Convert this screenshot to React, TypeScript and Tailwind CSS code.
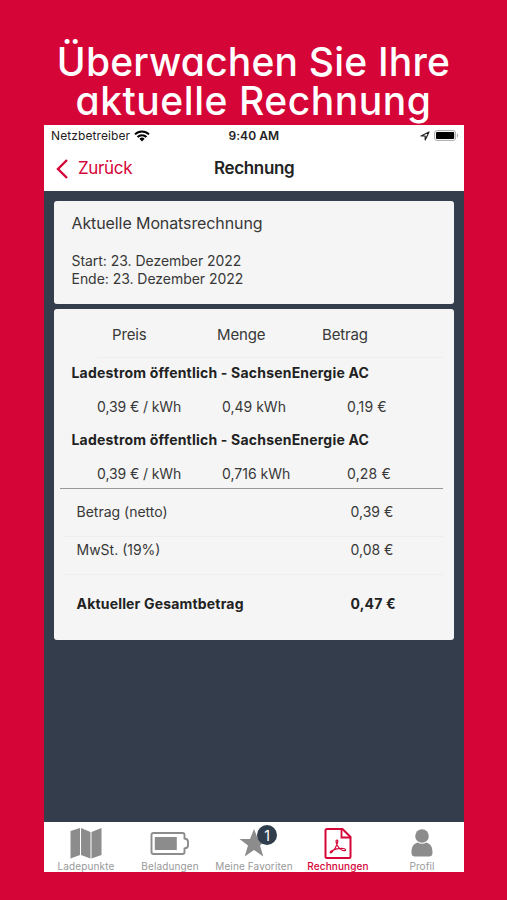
import type { ReactNode } from 'react'

const positions = [
  { title: 'Ladestrom öffentlich - SachsenEnergie AC', price: '0,39 € / kWh', amount: '0,49 kWh', total: '0,19 €' },
  { title: 'Ladestrom öffentlich - SachsenEnergie AC', price: '0,39 € / kWh', amount: '0,716 kWh', total: '0,28 €' }
]

function StatusBar() {
  return (
    <div className="relative flex h-[21px] items-center justify-between pl-[7px] pr-[5px] text-[12px] leading-[22px] text-[#222]">
      <div className="flex items-center gap-[4px]">
        <span className="tracking-[0.1px]">Netzbetreiber</span>
        <svg className="h-[12px] w-[16px]" viewBox="0 0 16 12">
          <path d="M1 4.4a10 10 0 0 1 14 0M3.5 7a6.4 6.4 0 0 1 9 0" fill="none" stroke="#000" strokeWidth="2" />
          <path d="M5.4 8.8a3.7 3.7 0 0 1 5.2 0L8 11.5z" fill="#000" />
        </svg>
      </div>
      <span className="absolute left-[184.500px] font-semibold tracking-[0.05px]">9:40 AM</span>
      <div className="flex items-center gap-[4px]">
        <svg className="h-[10px] w-[10px]" viewBox="0 0 10 10" fill="none" stroke="#222" strokeWidth="1.2" strokeLinejoin="round">
          <path d="M1 5 9 1 5.2 9V5z" />
        </svg>
        <svg className="h-[11px] w-[25px]" viewBox="0 0 25 11">
          <rect x=".6" y=".6" width="21" height="9.8" rx="2.4" fill="#fff" stroke="#aaa" />
          <rect x="2" y="2" width="18.2" height="7" rx="1" fill="#000" />
          <path d="M23 3.5c1.6.6 1.6 3.4 0 4z" fill="#aaa" />
        </svg>
      </div>
    </div>
  )
}

function Tab({ label, active, children }: { label: string; active?: boolean; children: ReactNode }) {
  return (
    <div className={`flex w-[84px] flex-col items-center ${active ? 'text-[#d50538]' : 'text-[#8c8c8c]'}`}>
      <div className="flex h-[38px] items-center pt-[4px]">{children}</div>
      <span
        className={`whitespace-nowrap text-[10px] leading-[12px] ${
          active ? 'font-medium tracking-[0.12px]' : 'tracking-[0.12px] text-[#999]'
        }`}
      >
        {label}
      </span>
    </div>
  )
}

function TabBar() {
  return (
    <nav className="flex h-[50px] bg-white">
      <Tab label="Ladepunkte">
        <svg className="h-[31px] w-[32px]" viewBox="0 0 32 31" fill="currentColor">
          <path d="M.5 3 10 0v27L.5 30.5zM11 0l9.5 4v26.5L11 27zM21.5 4 31.500 0v27l-10 3.500z" />
        </svg>
      </Tab>
      <Tab label="Beladungen">
        <svg className="h-[23px] w-[40px]" viewBox="0 0 40 23">
          <path
            d="M3.500 1h29q2 0 2 2v3.500q3.500.5 3.500 3v4q0 2.500-3.500 3v3.500q0 2-2 2h-29q-2 0-2-2V3q0-2 2-2z"
            fill="none"
            stroke="currentColor"
            strokeWidth="1.900"
          />
          <path d="M4.800 5h22v13h-22z" fill="currentColor" />
        </svg>
      </Tab>
      <Tab label="Meine Favoriten">
        <div className="relative">
          <svg className="h-[28px] w-[30px]" viewBox="0 0 30 28" fill="currentColor">
            <path d="m15 0 4 10h10.500l-8.500 6.500 3.300 11L15 21l-9.300 6.500 3.300-11L.5 10H11z" />
          </svg>
          <span className="absolute -top-[4px] left-[18px] flex h-[20px] w-[20px] items-center justify-center rounded-full bg-[#303d4c] text-[14px] text-white">
            1
          </span>
        </div>
      </Tab>
      <Tab label="Rechnungen" active>
        <svg className="h-[31px] w-[28px]" viewBox="0 0 28 31" fill="none" stroke="currentColor">
          <path d="M3 1h15.500L26.500 9v19.500q0 1.500-1.500 1.500H3q-1.500 0-1.500-1.500v-26Q1.500 1 3 1z" strokeWidth="2" />
          <path d="M17.500 1v8.500h9" strokeWidth="1.800" />
          <path
            d="M13 12c-1.500 0-1 3 .5 5.700 1.500 2.500 4 4.700 6.500 5 2.200.2 2.200-1.900-.8-2.200-4-.3-8.500.8-11.500 2.300-2.500 1.500-1.500 2.800.1 1.400 2-1.800 5-6.800 5.700-9.300.5-1.900.4-2.900-.5-2.900z"
            strokeWidth="1.200"
          />
        </svg>
      </Tab>
      <Tab label="Profil">
        <svg className="h-[28px] w-[24px]" viewBox="0 0 24 28" fill="currentColor">
          <circle cx="12" cy="7" r="6.800" />
          <path d="M7.500 13.500q4.500 2.500 9 0c4.500 1.500 6 4.500 6 10.500 0 2.500-1.500 3.500-3.500 3.500H5c-2 0-3.500-1-3.500-3.500 0-6 1.500-9 6-10.500z" />
        </svg>
      </Tab>
    </nav>
  )
}

export default function App() {
  return (
    <div className="flex h-[900px] w-[507px] flex-col bg-[#d50538] px-[44px] font-['Inter',sans-serif]">
      <h1 className="relative z-10 h-[125px] whitespace-nowrap pt-[42px] text-center text-[39px] font-medium leading-[39px] text-white [font-feature-settings:'cv11'_1]">
        <span className="tracking-[0.2px]">Überwachen Sie Ihre</span>
        <br />
        <span className="tracking-[0.55px]">aktuelle Rechnung</span>
      </h1>

      <main className="flex h-[747px] w-[420px] flex-col bg-[#343d4c]">
        <header className="h-[66px] bg-white">
          <StatusBar />
          <div className="relative flex h-[45px] items-center pl-[12px]">
            <svg className="h-[20px] w-[12px]" viewBox="0 0 12 20" fill="none" stroke="#d50538" strokeWidth="2.400">
              <path d="M11 1 2 10l9 9" />
            </svg>
            <span className="ml-[10px] pt-px text-[17px] tracking-[-0.35px] text-[#d50538]">Zurück</span>
            <span className="absolute left-[170px] pt-px text-[17px] font-semibold tracking-[-0.35px] text-[#222]">
              Rechnung
            </span>
          </div>
        </header>

        <div className="flex flex-1 flex-col gap-[5px] px-[10px] pt-[10px] text-[14px] text-[#383838]">
          <section className="h-[103px] rounded-[3px] bg-[#f5f5f5] pl-[17.500px] pt-[12px]">
            <h2 className="text-[16px] leading-[21px] tracking-[-0.1px]">Aktuelle Monatsrechnung</h2>
            <div className="mt-[18px] leading-[17.500px] tracking-[-0.04px]">
              <p>Start: 23. Dezember 2022</p>
              <p>Ende: 23. Dezember 2022</p>
            </div>
          </section>

          <section className="h-[331px] rounded-[3px] bg-[#f5f5f5] pr-[11px]">
            <div className="ml-[43px] grid h-[49px] grid-cols-[105px_105px_1fr] border-b border-[#eee] pl-[15px] pt-[3px] text-[15px] leading-[46px] tracking-[-0.15px]">
              <span>Preis</span>
              <span>Menge</span>
              <span>Betrag</span>
            </div>
            {positions.map((p, i) => (
              <div key={i} className="h-[67px]">
                <h3 className="pl-[17.500px] text-[14px] font-bold leading-[30px] tracking-[0.2px] text-[#222]">{p.title}</h3>
                <div className="grid grid-cols-[125px_125px_1fr] pl-[43px] leading-[37px]">
                  <span className="tracking-[-0.1px]">{p.price}</span>
                  <span>{p.amount}</span>
                  <span className="tracking-[0.15px]">{p.total}</span>
                </div>
              </div>
            ))}
            <div className="-mt-[4px] ml-[6px] border-t border-[#999] pl-[4px]">
              <div className="grid h-[48px] grid-cols-[274px_1fr] border-b border-[#eee] pl-[12.500px] leading-[46px]">
                <span>Betrag (netto)</span>
                <span>0,39 €</span>
              </div>
              <div className="grid h-[38px] grid-cols-[274px_1fr] border-b border-[#eee] pl-[12.500px] leading-[26px]">
                <span>MwSt. (19%)</span>
                <span>0,08 €</span>
              </div>
              <div className="grid grid-cols-[274px_1fr] pl-[12.500px] font-bold leading-[58px] tracking-[0.18px] text-[#222]">
                <span>Aktueller Gesamtbetrag</span>
                <span>0,47 €</span>
              </div>
            </div>
          </section>
        </div>

        <TabBar />
      </main>
    </div>
  )
}
